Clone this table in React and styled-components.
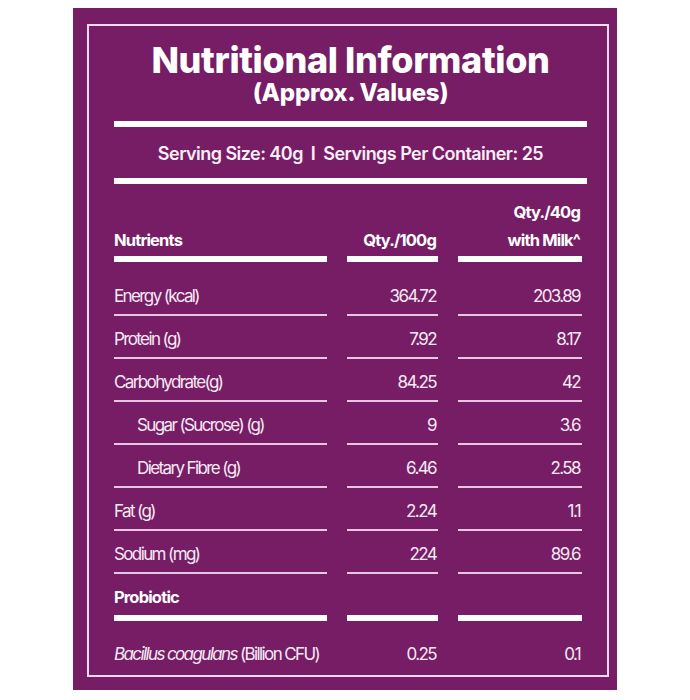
import React from 'react';
import styled, { createGlobalStyle } from 'styled-components';

const GlobalStyle = createGlobalStyle`
  body {
    margin: 0;
    background: #ffffff;
    font-family: 'Inter', 'Liberation Sans', sans-serif;
  }
`;

const Page = styled.div`
  padding: 8px 0 10px 73px;
`;

const Label = styled.section`
  box-sizing: border-box;
  width: 544px;
  height: 682px;
  padding: 16px 8px 13px 14px;
  background: #761d65;
  color: #f8eef6;
`;

const Frame = styled.div`
  box-sizing: border-box;
  height: 100%;
  border: 2px solid #f0dcee;
  padding: 19px 20px 11px 25px;
  display: flex;
  flex-direction: column;

  & > * {
    flex-shrink: 0;
  }
`;

const Title = styled.h1`
  margin: 0;
  font-size: 36px;
  line-height: 30px;
  font-weight: 800;
  letter-spacing: -0.01em;
  text-align: center;
  color: #ffffff;
`;

const Subtitle = styled.h2`
  margin: 9px 0 0;
  font-size: 24px;
  line-height: 17px;
  font-weight: 800;
  letter-spacing: -0.01em;
  text-align: center;
  color: #ffffff;
`;

const Rule = styled.div`
  height: 6px;
  background: #ffffff;
  margin-top: ${({ $gap }) => $gap}px;
`;

const Serving = styled.p`
  margin: 17px 0 0;
  font-size: 18px;
  line-height: 20px;
  font-weight: 600;
  letter-spacing: -0.03em;
  text-align: center;
`;

const Table = styled.div`
  margin-top: 14px;
  width: 468px;
`;

const TableRow = styled.div`
  display: grid;
  grid-template-columns: 213px 91px 124px;
  column-gap: 20px;
  align-items: end;
`;

const Cell = styled.div`
  padding: ${({ $top }) => $top ?? 13}px ${({ $right }) => ($right ? 2 : 0)}px
    ${({ $head }) => ($head ? 2 : 8)}px ${({ $indent }) => ($indent ? 23 : 0)}px;
  border-bottom: ${({ $rule }) =>
    $rule === 'thick' ? '6px solid #ffffff' : $rule === 'none' ? '0' : '2px solid #e8c6e3'};
  text-align: ${({ $right }) => ($right ? 'right' : 'left')};
  white-space: nowrap;
  font-size: ${({ $bold }) => ($bold ? 16.5 : 17)}px;
  line-height: ${({ $head }) => ($head ? 28 : 20)}px;
  font-weight: ${({ $bold }) => ($bold ? 700 : 400)};
  letter-spacing: ${({ $bold }) => ($bold ? '-0.05em' : '-0.095em')};
  color: ${({ $bold }) => ($bold ? '#ffffff' : '#f6eaf4')};
  min-height: 20px;
`;

const Species = styled.em`
  font-style: italic;
`;

const rows = [
  { name: 'Energy (kcal)', a: '364.72', b: '203.89', top: 24 },
  { name: 'Protein (g)', a: '7.92', b: '8.17' },
  { name: 'Carbohydrate(g)', a: '84.25', b: '42' },
  { name: 'Sugar (Sucrose) (g)', a: '9', b: '3.6', indent: true },
  { name: 'Dietary Fibre (g)', a: '6.46', b: '2.58', indent: true },
  { name: 'Fat (g)', a: '2.24', b: '1.1' },
  { name: 'Sodium (mg)', a: '224', b: '89.6' },
];

const App = () => {
  return (
    <Page>
      <GlobalStyle />
      <Label>
        <Frame>
          <Title>Nutritional Information</Title>
          <Subtitle>(Approx. Values)</Subtitle>
          <Rule $gap={20} />
          <Serving>Serving Size: 40g&nbsp; I &nbsp;Servings Per Container: 25</Serving>
          <Rule $gap={14} />

          <Table>
            <TableRow>
              <Cell $top={0} $head $bold $rule="thick">Nutrients</Cell>
              <Cell $top={0} $head $bold $right $rule="thick">Qty./100g</Cell>
              <Cell $top={0} $head $bold $right $rule="thick">
                Qty./40g
                <br />
                with Milk^
              </Cell>
            </TableRow>

            {rows.map((row) => (
              <TableRow key={row.name}>
                <Cell $top={row.top} $indent={row.indent}>{row.name}</Cell>
                <Cell $top={row.top} $right>{row.a}</Cell>
                <Cell $top={row.top} $right>{row.b}</Cell>
              </TableRow>
            ))}

            <TableRow>
              <Cell $bold $rule="thick">Probiotic</Cell>
              <Cell $rule="thick" />
              <Cell $rule="thick" />
            </TableRow>

            <TableRow>
              <Cell $top={23} $rule="none">
                <Species>Bacillus coagulans</Species> (Billion CFU)
              </Cell>
              <Cell $top={23} $right $rule="none">0.25</Cell>
              <Cell $top={23} $right $rule="none">0.1</Cell>
            </TableRow>
          </Table>
        </Frame>
      </Label>
    </Page>
  );
};

export default App;
